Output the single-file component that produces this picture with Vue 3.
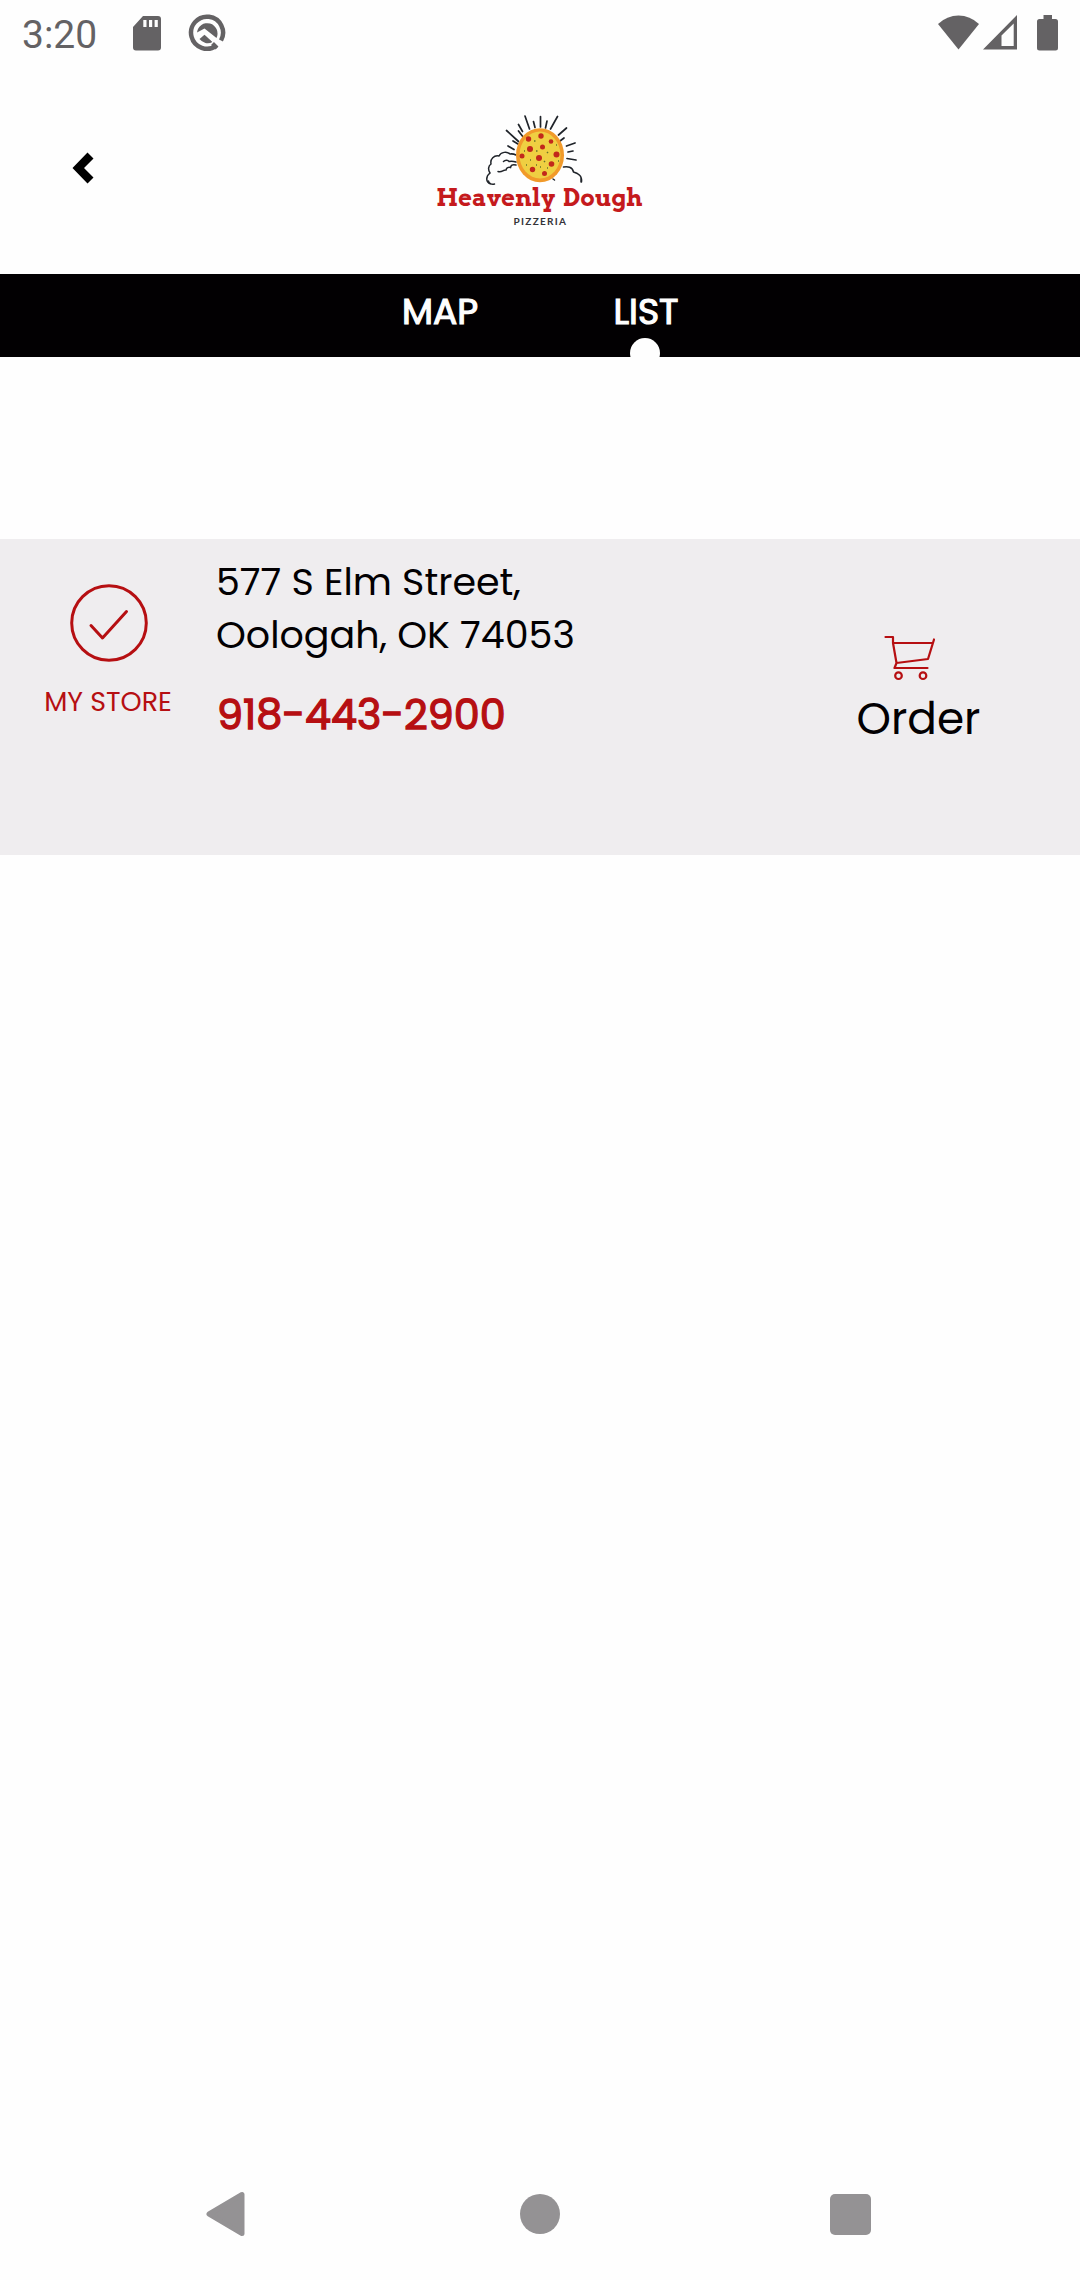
<template>
  <div class="screen">
    <div class="status-bar">
      <span class="clock">3:20</span>
      <svg class="icon-sd" viewBox="0 0 28 35">
        <path d="M10 0H25a3 3 0 0 1 3 3V31.500a3 3 0 0 1-3 3H3a3 3 0 0 1-3-3V11z" fill="#646264" />
        <path d="M10.300 4h3.200v7h-3.200zM16 4h3.200v7H16zM21.600 4h3.200v7h-3.200z" fill="#fefefe" />
      </svg>
      <svg class="icon-q" viewBox="0 0 38 38">
        <path d="M28.500 31.600A16 16 0 1 1 33 26.500" fill="none" stroke="#646264" stroke-width="4.500" />
        <path d="M9 18.500A10.300 10.300 0 1 1 28.500 24L16.500 14.500z" fill="#646264" />
        <path d="M11.500 25l5-4.200 8 7.200a10.300 10.300 0 0 1-13-3z" fill="#646264" />
        <path d="M24 24.500l8.500 9.500" stroke="#fefefe" stroke-width="3.500" />
        <path d="M24.500 29.500l4.500 4.500" stroke="#646264" stroke-width="4" />
      </svg>
      <div class="status-right">
        <svg class="icon-wifi" viewBox="0 0 41 35">
          <path d="M0 9Q9 .5 20.500 .5T41 9L20.500 34.500z" fill="#646264" />
        </svg>
        <svg class="icon-signal" viewBox="0 0 34 35">
          <path fill-rule="evenodd" d="M34 0V34.500H0zM30.700 8.500L18.500 20.500V31H30.700z" fill="#646264" />
        </svg>
        <svg class="icon-battery" viewBox="0 0 21 36">
          <path d="M6.500 0h8.500v4h3.500a2.500 2.500 0 0 1 2.500 2.500V33a2.500 2.500 0 0 1-2.500 2.500h-16A2.500 2.500 0 0 1 0 33V6.500A2.500 2.500 0 0 1 2.500 4h4z" fill="#646264" />
        </svg>
      </div>
    </div>

    <header class="header">
      <button class="btn-back" aria-label="Back">
        <svg viewBox="0 0 22 32">
          <path d="M15.500 .5L21.500 6.500 12 16l9.500 9.500-6 6L.5 16z" />
        </svg>
      </button>
      <svg class="logo" viewBox="0 0 240 140">
        <g stroke="#20242a" stroke-width="1.500" stroke-linecap="round" fill="none">
          <g stroke-width="1.700">
            <path d="M86.500 30.500l12 11M105 16l4.500 13M120.500 16.500V27M137.500 16.500l-7 12.500M146.500 28l-8 7M155 43l-8.500 3M156 60l-9-1.500" />
            <path d="M88 46l6 3.500M93 41l5 3M98.500 31l5 6.500M113.500 21.500l1.500 6M127 21l-1.500 7M144 38l-4 3M153 51l-5 1M98.500 24.500l4 7" />
          </g>
          <path d="M96 55c-2-1-3-1.500-6-1-3-3-9-2-11 2-5-1-9 3-8 8-3 2-3 6-1 9-4 3-5 9 1 11M74.500 84c-3 1-6-1-6-3" />
          <path d="M96 62c-3-1-5-1-7-.5-1-2-4-1.500-5.500 0M96 65c-4-1-5 .5-5.500 2.500-2-.5-4 0-4.500 2.500-3-.5-4 3-8 1.500" />
          <path d="M143.500 67c4-1 9 0 10 5 4 1 9 4 8 10M161 78v4M133 79l1.500 1" />
        </g>
        <ellipse cx="120" cy="55.200" rx="24" ry="27" fill="#f19a2a" />
        <ellipse cx="120" cy="55" rx="20.500" ry="23.500" fill="#efcf42" />
        <g fill="#c2281b">
          <circle cx="108.500" cy="39" r="2.700" /><circle cx="121" cy="36" r="2.700" />
          <circle cx="131" cy="41.500" r="2.300" /><circle cx="110" cy="49" r="3" />
          <circle cx="122.500" cy="47" r="2.500" /><circle cx="102" cy="56" r="2.500" />
          <circle cx="119" cy="58" r="3" /><circle cx="136.500" cy="54.500" r="3" />
          <circle cx="131.500" cy="64" r="2.800" /><circle cx="112.500" cy="69.500" r="2.700" />
          <circle cx="124.500" cy="73.500" r="2.500" />
        </g>
        <path class="herbs" d="M114 41h1.500M116 51h1.500M127 52l1 1M104 51h1M124 61l1 1M110 60h1M116 65h1M127 68h1M136 45h1M138 61h1M106 65h1M120 67h1" />
        <text class="logo-name" x="16.300" y="106" textLength="119" lengthAdjust="spacingAndGlyphs">Heavenly</text>
        <text class="logo-name" x="143" y="106" textLength="79.500" lengthAdjust="spacingAndGlyphs">Dough</text>
        <text class="logo-sub" x="93.500" y="124.500" textLength="52.500">PIZZERIA</text>
      </svg>
    </header>

    <nav class="tabs">
      <div
        v-for="tab in tabs"
        :key="tab"
        class="tab"
        :class="{ active: tab === activeTab }"
        @click="activeTab = tab"
      >
        {{ tab }}
      </div>
    </nav>

    <section class="store-card">
      <div class="my-store">
        <svg class="icon-check" viewBox="0 0 78 78">
          <circle cx="39" cy="39" r="37.300" />
          <path d="M21 41.500L32.500 54 56.500 27.500" />
        </svg>
        <span class="my-store-label">MY STORE</span>
      </div>
      <div class="store-info">
        <div class="address">{{ store.street }}</div>
        <div class="address">{{ store.city }}</div>
        <div class="phone">{{ store.phone }}</div>
      </div>
      <div class="order">
        <svg class="icon-cart" viewBox="0 0 51 46">
          <path d="M1.500 2H9V8L12.500 28 10.500 33H43.500M9 8H48M50 4.500L44 24 12.500 28" />
          <circle cx="14.500" cy="40.700" r="3.300" />
          <circle cx="39" cy="40.700" r="3.300" />
        </svg>
        <span class="order-label">Order</span>
      </div>
    </section>

    <div class="nav-bar">
      <svg class="nav-back" viewBox="0 0 40 46">
        <path d="M3 23L36 3.500V42.500z" />
      </svg>
      <span class="nav-home"></span>
      <span class="nav-recent"></span>
    </div>
  </div>
</template>

<script setup>
import { ref } from "vue";

const tabs = ["MAP", "LIST"];
const activeTab = ref("LIST");

const store = {
  street: "577 S Elm Street,",
  city: "Oologah, OK 74053",
  phone: "918-443-2900",
};
</script>

<style>
body {
  background-color: #fefefe;
}
</style>

<style scoped>
.screen {
  width: 1080px;
  height: 2280px;
  display: flex;
  flex-direction: column;
  overflow: hidden;
  background-color: #fefefe;
  font-family: Poppins, Inter, "Liberation Sans", sans-serif;
  color: #020002;
}

svg {
  display: block;
  flex-shrink: 0;
}

.status-bar {
  height: 68px;
  display: flex;
  align-items: flex-start;
  padding: 0 22px;
  box-sizing: border-box;
}

.clock {
  width: 111px;
  font-family: Roboto, sans-serif;
  font-size: 39px;
  line-height: 70px;
  color: #646264;
}

.icon-sd {
  width: 28px;
  height: 35px;
  margin-top: 16px;
}

.icon-q {
  width: 38px;
  height: 38px;
  margin: 14px 0 0 27px;
}

.status-right {
  display: flex;
  margin: 15px 0 0 auto;
}

.icon-wifi {
  width: 41px;
  height: 35px;
}

.icon-signal {
  width: 34px;
  height: 35px;
  margin-left: 4px;
}

.icon-battery {
  width: 21px;
  height: 36px;
  margin-left: 20px;
}

.header {
  height: 206px;
  display: flex;
}

.btn-back {
  width: 22px;
  height: 32px;
  margin: 84px 0 0 72px;
  padding: 0;
  border: none;
  background: none;
  cursor: pointer;
}

.logo {
  width: 240px;
  height: 140px;
  margin: 32px 0 0 326px;
}

.herbs {
  fill: none;
  stroke: #66732a;
  stroke-width: 1.5;
}

.logo-name {
  font-family: Arvo, "Zilla Slab", "Roboto Slab", "DejaVu Serif", serif;
  font-size: 24.500px;
  font-weight: bold;
  fill: #c51a1d;
}

.logo-sub {
  font-family: Lato, sans-serif;
  font-size: 10px;
  font-weight: bold;
  fill: #333338;
}

.tabs {
  height: 83px;
  display: flex;
  justify-content: center;
  padding-left: 4px;
  background-color: #020002;
}

.tab {
  position: relative;
  width: 206px;
  padding-left: 2px;
  box-sizing: border-box;
  overflow: hidden;
  text-align: center;
  font-size: 36px;
  line-height: 75px;
  color: #fefefe;
  -webkit-text-stroke: 1.2px #fefefe;
  cursor: pointer;
}

.tab.active::after {
  content: "";
  position: absolute;
  left: 88px;
  top: 64px;
  width: 30px;
  height: 30px;
  border-radius: 50%;
  background-color: #fefefe;
}

.store-card {
  height: 316px;
  margin-top: 182px;
  display: flex;
  background-color: #efedef;
}

.my-store {
  width: 216px;
  display: flex;
  flex-direction: column;
  align-items: center;
  padding-top: 45px;
  box-sizing: border-box;
}

.icon-check {
  width: 78px;
  height: 78px;
  margin-left: 1px;
}

.icon-check circle,
.icon-check path,
.icon-cart path,
.icon-cart circle {
  fill: none;
  stroke: #b60f12;
  stroke-width: 3;
  stroke-linecap: round;
  stroke-linejoin: round;
}

.icon-cart path,
.icon-cart circle {
  stroke-width: 2.2;
}

.my-store-label {
  margin-top: 24px;
  font-size: 26.900px;
  line-height: 32px;
  white-space: nowrap;
  color: #b60f12;
}

.store-info {
  width: 561px;
  padding-top: 16px;
  white-space: nowrap;
}

.address {
  font-size: 38px;
  line-height: 53px;
}

.phone {
  margin-top: 24px;
  padding-left: 1px;
  font-size: 41.300px;
  line-height: 60px;
  color: #b60f12;
  -webkit-text-stroke: 1.3px #b60f12;
}

.order {
  width: 283px;
  display: flex;
  flex-direction: column;
  align-items: center;
  padding-top: 96px;
  box-sizing: border-box;
}

.icon-cart {
  width: 51px;
  height: 46px;
  margin-right: 19px;
}

.order-label {
  margin-top: 12px;
  font-size: 43.800px;
  line-height: 52px;
}

.nav-bar {
  height: 132px;
  margin-top: auto;
  display: flex;
  align-items: center;
}

.nav-back {
  width: 40px;
  height: 46px;
  margin-left: 206px;
}

.nav-back path {
  fill: #949294;
  stroke: #949294;
  stroke-width: 5;
  stroke-linejoin: round;
}

.nav-home {
  width: 40px;
  height: 40px;
  margin-left: 274px;
  border-radius: 50%;
  background-color: #949294;
}

.nav-recent {
  width: 41px;
  height: 41px;
  margin-left: 270px;
  border-radius: 5px;
  background-color: #949294;
}
</style>
